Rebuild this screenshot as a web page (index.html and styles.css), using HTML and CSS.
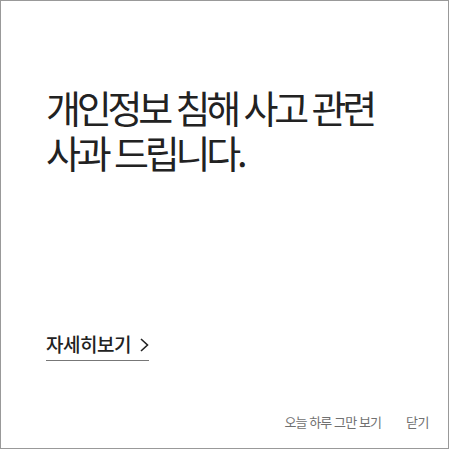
FILE: index.html
```html
<!DOCTYPE html>
<html lang="ko">
<head>
<meta charset="utf-8">
<link rel="stylesheet" href="styles.css">
</head>
<body>
<div class="popup">
  <div class="content">
    <h1 class="title"><span class="line">개인정보 침해 사고 관련</span><span class="line">사과 드립니다.</span></h1>
    <a class="more" href="#">자세히보기<svg class="arrow" width="9" height="14" viewBox="0 0 9 14"><path d="M1 1 L7.5 7 L1 13" fill="none" stroke="#222" stroke-width="1.6"/></svg></a>
  </div>
  <div class="footer">
    <span class="today">오늘 하루 그만 보기</span>
    <span class="close">닫기</span>
  </div>
</div>
</body>
</html>
```
FILE: styles.css
```css
html, body {
  margin: 0;
  padding: 0;
  background: #fff;
}
body {
  font-family: "Noto Sans CJK KR", "Noto Sans", sans-serif;
}
.popup {
  width: 449px;
  height: 449px;
  box-sizing: border-box;
  border: 1px solid #999;
  display: flex;
  flex-direction: column;
}
.content {
  flex: 1;
  padding: 83px 0 0 45px;
  display: flex;
  flex-direction: column;
  align-items: flex-start;
}
.title {
  margin: 0;
  font-size: 38px;
  font-weight: 400;
  line-height: 45px;
  letter-spacing: -4.2px;
  color: #222;
}
.line {
  display: block;
}
.more {
  margin-top: 157px;
  display: flex;
  align-items: center;
  gap: 10px;
  font-size: 19px;
  font-weight: 500;
  line-height: 26px;
  color: #222;
  text-decoration: none;
  letter-spacing: -0.5px;
  padding-bottom: 3px;
  border-bottom: 1px solid #777;
}
.arrow {
  display: block;
  margin-top: 2px;
  margin-left: -1px;
}
.footer {
  display: flex;
  justify-content: flex-end;
  gap: 25px;
  padding: 0 19px 17px 0;
  font-size: 13px;
  color: #707070;
  letter-spacing: -0.9px;
}
.close {
  letter-spacing: -0.5px;
}
```
